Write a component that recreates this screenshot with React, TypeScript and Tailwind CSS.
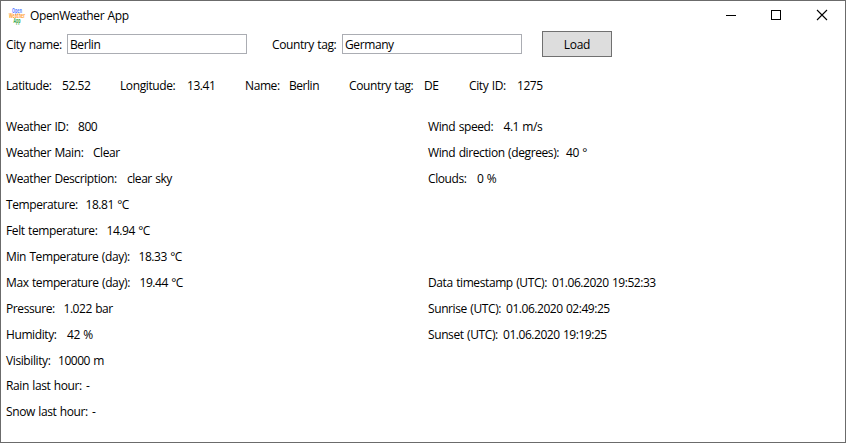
import React from "react";

type Field = { label: string; value: string; w: string };

const location: Field[] = [
  { label: "Latitude:", value: "52.52", w: "w-[56px]" },
  { label: "Longitude:", value: "13.41", w: "w-[67px]" },
  { label: "Name:", value: "Berlin", w: "w-[44px]" },
  { label: "Country tag:", value: "DE", w: "w-[75px]" },
  { label: "City ID:", value: "1275", w: "w-[48px]" },
];
const locationWidths = ["w-[114px]", "w-[125px]", "w-[104px]", "w-[120px]", "w-[100px]"];

const left: Field[] = [
  { label: "Weather ID:", value: "800", w: "w-[72px]" },
  { label: "Weather Main:", value: "Clear", w: "w-[87px]" },
  { label: "Weather Description:", value: "clear sky", w: "w-[121px]" },
  { label: "Temperature:", value: "18.81 °C", w: "w-[79.5px]" },
  { label: "Felt temperature:", value: "14.94 °C", w: "w-[100.5px]" },
  { label: "Min Temperature (day):", value: "18.33 °C", w: "w-[132.5px]" },
  { label: "Max temperature (day):", value: "19.44 °C", w: "w-[133.5px]" },
  { label: "Pressure:", value: "1.022 bar", w: "w-[57.5px]" },
  { label: "Humidity:", value: "42 %", w: "w-[61px]" },
  { label: "Visibility:", value: "10000 m", w: "w-[52px]" },
  { label: "Rain last hour:", value: "-", w: "w-[80px]" },
  { label: "Snow last hour:", value: "-", w: "w-[86px]" },
];

const wind: Field[] = [
  { label: "Wind speed:", value: "4.1 m/s", w: "w-[75.5px]" },
  { label: "Wind direction (degrees):", value: "40 °", w: "w-[138px]" },
  { label: "Clouds:", value: "0 %", w: "w-[49px]" },
];
const times: Field[] = [
  { label: "Data timestamp (UTC):", value: "01.06.2020 19:52:33", w: "w-[124px]" },
  { label: "Sunrise (UTC):", value: "01.06.2020 02:49:25", w: "w-[78px]" },
  { label: "Sunset (UTC):", value: "01.06.2020 19:19:25", w: "w-[75px]" },
];

function Pair({ label, value, w }: Field) {
  return (
    <div className="flex h-[26px] items-center">
      <span className={`shrink-0 ${w}`}>{label}</span>
      <span className="tracking-[-0.46px]">{value}</span>
    </div>
  );
}

function Logo() {
  return (
    <svg className="overflow-visible" width="18" height="18" viewBox="0 0 18 18" fontFamily="Open Sans, sans-serif" fontSize="6.2" fontWeight="700" textAnchor="middle" letterSpacing="0" wordSpacing="0">
      <text x="9" y="5.6" fill="#5b83ff" textLength="10" lengthAdjust="spacingAndGlyphs">Open</text>
      <text x="9" y="11" fill="#ff9d2e" textLength="16" lengthAdjust="spacingAndGlyphs">Weather</text>
      <text x="9" y="16.2" fill="#35a84a" textLength="7" lengthAdjust="spacingAndGlyphs">App</text>
    </svg>
  );
}

export default function App() {
  return (
    <div className="flex h-[443px] w-[846px] flex-col overflow-hidden whitespace-nowrap border border-[#6b6b6b] bg-white font-['Open_Sans','Noto_Sans',sans-serif] text-[12px] leading-4 tracking-[-0.4px] text-black [word-spacing:0.7px]">
      <header className="flex h-[29px] shrink-0 items-center pl-[7px]">
        <Logo />
        <h1 className="ml-[4px] grow pt-px text-[12px]">OpenWeather App</h1>
        <svg className="mr-[-1px]" width="120" height="29" viewBox="0 0 120 29" fill="none" stroke="#000" shapeRendering="crispEdges">
          <path d="M0 14.5h10" />
          <path d="M45.5 9.5h9v9h-9z" />
          <path d="M91 9l10 10M101 9l-10 10" shapeRendering="auto" strokeWidth="1.1" />
        </svg>
      </header>

      <form className="flex h-[28px] shrink-0 items-center pl-[5px]" onSubmit={(e) => e.preventDefault()}>
        <label className="w-[61px] pt-[2px]">City name:</label>
        <input className="h-[20px] w-[180px] border border-[#abadb3] px-[2px] tracking-[-0.4px] outline-none" defaultValue="Berlin" />
        <label className="ml-[25px] w-[70px] pt-[2px]">Country tag:</label>
        <input className="h-[20px] w-[180px] border border-[#abadb3] px-[2px] tracking-[-0.4px] outline-none" defaultValue="Germany" />
        <button className="ml-[20px] h-[26px] w-[70px] border border-[#707070] bg-[#dddddd] pt-[2px] tracking-[-0.3px]">Load</button>
      </form>

      <section className="mt-[15px] flex h-[26px] shrink-0 pl-[5px]">
        {location.map((f, i) => (
          <div key={f.label} className={`shrink-0 ${locationWidths[i]}`}>
            <Pair {...f} />
          </div>
        ))}
      </section>

      <main className="mt-[15px] flex pl-[5px]">
        <div className="w-[422px] shrink-0">
          <div>{left.slice(0, 10).map((f) => <Pair key={f.label} {...f} />)}</div>
          <div className="-mt-px">{left.slice(10).map((f) => <Pair key={f.label} {...f} />)}</div>
        </div>
        <div>
          <div>{wind.map((f) => <Pair key={f.label} {...f} />)}</div>
          <div className="mt-[78px]">{times.map((f) => <Pair key={f.label} {...f} />)}</div>
        </div>
      </main>
    </div>
  );
}
